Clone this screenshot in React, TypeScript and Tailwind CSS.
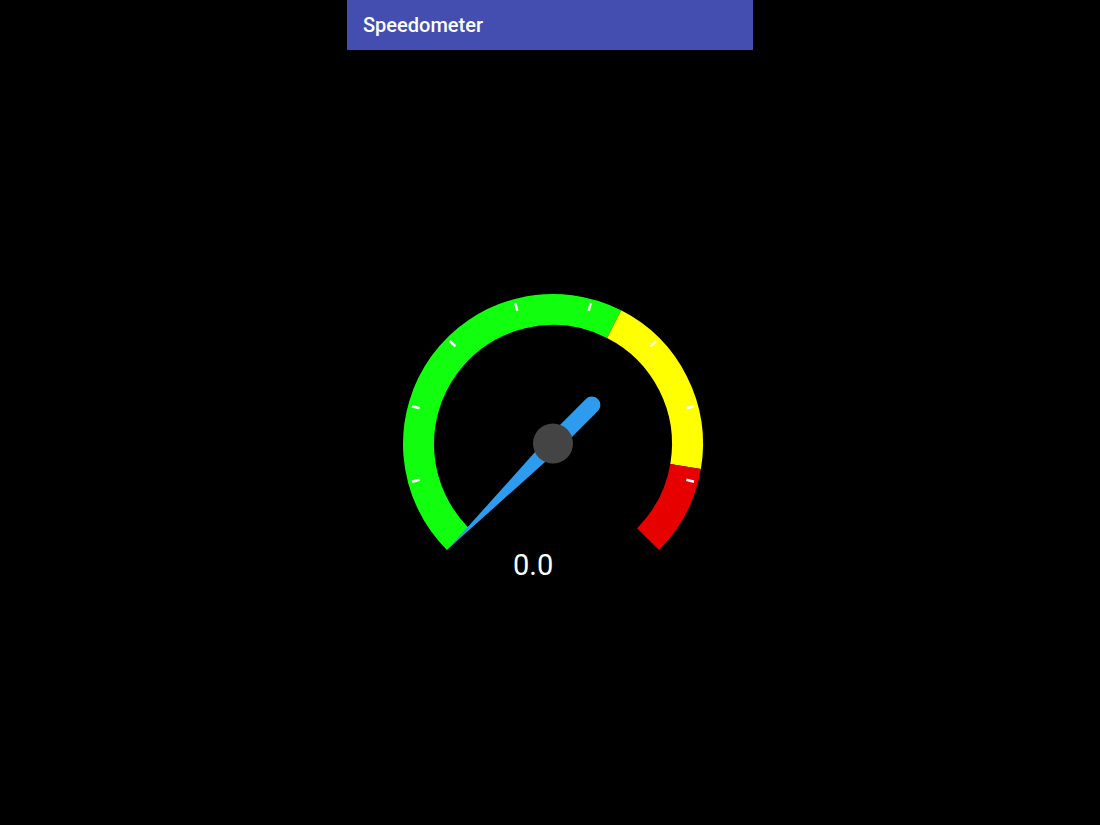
import React from 'react';

// gauge geometry, svg coords (hub at 160,160)
const CX = 160;
const CY = 160;
const R_MID = 134.5;
const START = 135;
const SWEEP = 270;

const pt = (deg: number, r: number) => {
  const a = (deg * Math.PI) / 180;
  return [CX + r * Math.cos(a), CY + r * Math.sin(a)];
};

const arc = (from: number, to: number, r: number) => {
  const [x0, y0] = pt(from, r);
  const [x1, y1] = pt(to, r);
  const large = to - from > 180 ? 1 : 0;
  return `M ${x0} ${y0} A ${r} ${r} 0 ${large} 1 ${x1} ${y1}`;
};

const bands = [
  { from: 0, to: 0.6, color: '#11ff0f' },
  { from: 0.6, to: 0.869, color: '#ffff00' },
  { from: 0.869, to: 1, color: '#e60000' },
];

function Gauge({ value }: { value: number }) {
  const needleDeg = START + SWEEP * value;
  const [tx, ty] = pt(needleDeg, 149);
  const [ax, ay] = pt(needleDeg + 90, 8);
  const [bx, by] = pt(needleDeg - 90, 8);
  const [ex, ey] = pt(needleDeg + 180, 55);

  return (
    <svg width="320" height="266" viewBox="0 0 320 266">
      {bands.map((b) => (
        <path
          key={b.color}
          d={arc(START + SWEEP * b.from, START + SWEEP * b.to, R_MID)}
          fill="none"
          stroke={b.color}
          strokeWidth="31"
        />
      ))}
      {/* tick marks every 30deg */}
      {[1, 2, 3, 4, 5, 6, 7, 8].map((k) => {
        const [x0, y0] = pt(START + 30 * k, 138);
        const [x1, y1] = pt(START + 30 * k, 146);
        return <line key={k} x1={x0} y1={y0} x2={x1} y2={y1} stroke="#ffffff" strokeWidth="2.5" />;
      })}
      {/* needle */}
      <polygon points={`${tx},${ty} ${ax},${ay} ${bx},${by}`} fill="#2e9cee" />
      <line x1={CX} y1={CY} x2={ex} y2={ey} stroke="#2e9cee" strokeWidth="17" strokeLinecap="round" />
      <circle cx={CX} cy={CY - 0.5} r="20" fill="#444444" />
    </svg>
  );
}

export default function App() {
  return (
    <div className="min-h-[825px] w-full bg-black flex justify-center" style={{ fontFamily: 'Roboto, "Liberation Sans", sans-serif' }}>
      <div className="w-[406px] flex flex-col">
        <div className="h-[50px] bg-[#434eb0] flex items-center pl-4">
          <span className="text-[20px] leading-5 font-medium text-white">Speedometer</span>
        </div>
        <div className="mt-[234px] ml-[46px]">
          <Gauge value={0} />
        </div>
        <div className="mt-[1px] ml-[166px] text-[29px] leading-7 text-white">0.0</div>
      </div>
    </div>
  );
}
